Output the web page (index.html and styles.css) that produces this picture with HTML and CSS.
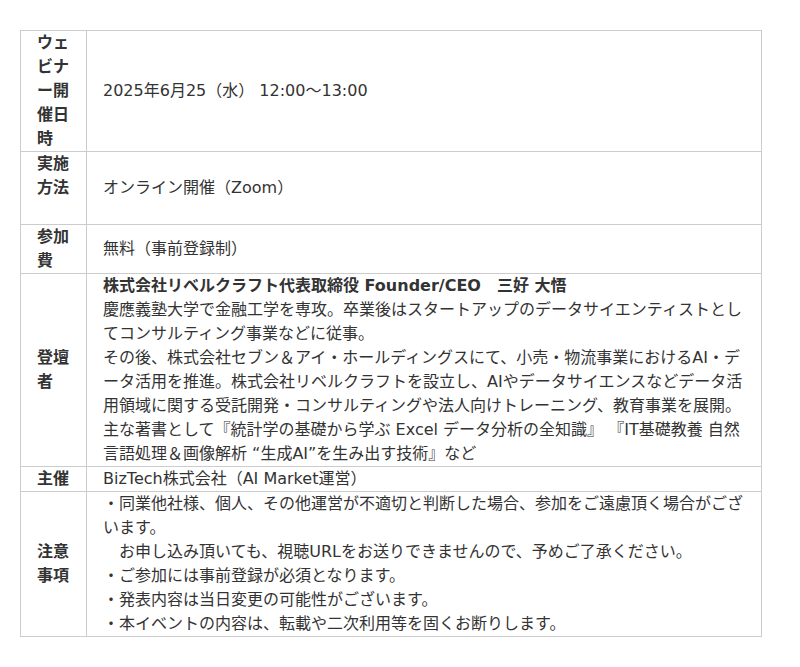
FILE: index.html
```html
<!DOCTYPE html>
<html lang="ja">
<head>
  <meta charset="UTF-8">
  <meta name="viewport" content="width=device-width, initial-scale=1.0">
  <title>ウェビナー概要</title>
  <link rel="stylesheet" href="styles.css">
</head>
<body>
  <table class="info">
    <tr>
      <th>ウェビナー開催日時</th>
      <td>2025年6月25（水） 12:00～13:00</td>
    </tr>
    <tr>
      <th class="top">実施方法<br>&nbsp;</th>
      <td>オンライン開催（Zoom）</td>
    </tr>
    <tr>
      <th>参加費</th>
      <td>無料（事前登録制）</td>
    </tr>
    <tr>
      <th>登壇者</th>
      <td>
        <strong>株式会社リベルクラフト代表取締役 Founder/CEO　三好 大悟</strong><br>
        慶應義塾大学で金融工学を専攻。卒業後はスタートアップのデータサイエンティストとしてコンサルティング事業などに従事。<br>
        その後、株式会社セブン＆アイ・ホールディングスにて、小売・物流事業におけるAI・データ活用を推進。株式会社リベルクラフトを設立し、AIやデータサイエンスなどデータ活用領域に関する受託開発・コンサルティングや法人向けトレーニング、教育事業を展開。<br>
        主な著書として『統計学の基礎から学ぶ Excel データ分析の全知識』 『IT基礎教養 自然言語処理＆画像解析 “生成AI”を生み出す技術』など
      </td>
    </tr>
    <tr>
      <th>主催</th>
      <td>BizTech株式会社（AI Market運営）</td>
    </tr>
    <tr>
      <th>注意事項</th>
      <td>
        ・同業他社様、個人、その他運営が不適切と判断した場合、参加をご遠慮頂く場合がございます。<br>
        　お申し込み頂いても、視聴URLをお送りできませんので、予めご了承ください。<br>
        ・ご参加には事前登録が必須となります。<br>
        ・発表内容は当日変更の可能性がございます。<br>
        ・本イベントの内容は、転載や二次利用等を固くお断りします。
      </td>
    </tr>
  </table>
</body>
</html>
```

FILE: styles.css
```css
body {
  margin: 0;
  padding: 30px 20px;
  font-family: "DejaVu Sans", "Noto Sans CJK JP", sans-serif;
  font-size: 16px;
  line-height: 24px;
  color: #333;
  background: #fff;
}
.info {
  width: 742px;
  border-collapse: collapse;
}
.info th,
.info td {
  border: 1px solid #ccc;
  padding: 0 16px;
  vertical-align: middle;
}
.info th {
  width: 33px;
  font-weight: bold;
  text-align: left;
}
.info th.top {
  vertical-align: top;
}
.info td {
  text-align: left;
}
```
